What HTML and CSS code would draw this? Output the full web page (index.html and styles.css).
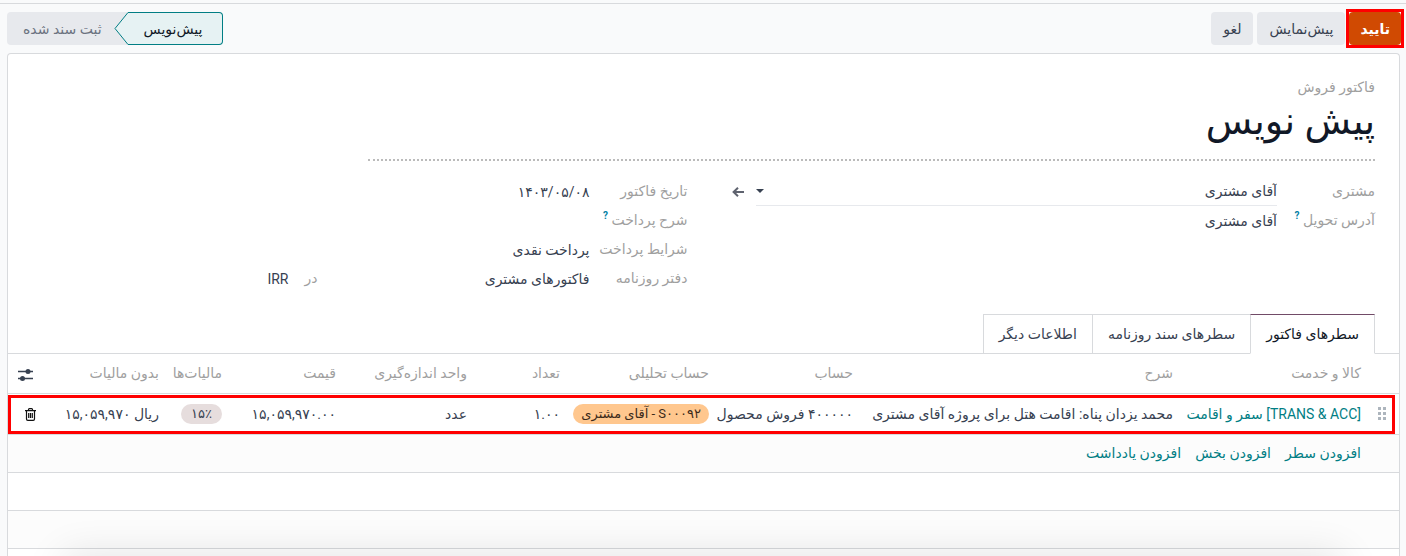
FILE: index.html
```html
<!DOCTYPE html>
<html lang="fa" dir="rtl">
<head>
  <meta charset="UTF-8">
  <title>فاکتور فروش</title>
  <meta name="viewport" content="width=device-width, initial-scale=1.0">
  <link rel="stylesheet" href="styles.css">
</head>
<body>
  <header class="control-bar">
    <div class="actions">
      <div class="marked">
        <button class="btn btn-primary" type="button">تایید</button>
      </div>
      <button class="btn" type="button">پیش‌نمایش</button>
      <button class="btn" type="button">لغو</button>
    </div>
    <div class="statusbar">
      <button class="status status-active" type="button">
        پیش‌نویس
        <svg class="status-arrow" width="15" height="33" viewBox="0 0 15 33" aria-hidden="true">
          <path d="M15 .5H14L1 16.500L14 32.500H15" fill="#e6f2f3" stroke="#017e84"/>
        </svg>
      </button>
      <button class="status" type="button">ثبت سند شده</button>
    </div>
  </header>

  <main class="sheet">
    <div class="title-block">
      <div class="doc-type">فاکتور فروش</div>
      <h1>پیش نویس</h1>
    </div>

    <div class="fields">
      <div class="group">
        <div class="field">
          <label for="customer">مشتری</label>
          <div class="value">
            <div class="combo">
              <input type="text" id="customer" value="آقای مشتری">
              <svg width="8" height="4" viewBox="0 0 8 4" aria-hidden="true"><path d="M0 0h8L4 4z" fill="#374151"/></svg>
            </div>
            <button class="open-record" type="button" aria-label="باز کردن">
              <svg width="12" height="10" viewBox="0 0 12 10" fill="none" stroke="#5f636f" stroke-width="2" aria-hidden="true"><path d="M12 5H2M6 .8L1.600 5L6 9.200"/></svg>
            </button>
          </div>
        </div>
        <div class="field">
          <label for="address">آدرس تحویل <sup>?</sup></label>
          <div class="value"><input type="text" id="address" value="آقای مشتری"></div>
        </div>
      </div>

      <div class="group">
        <div class="field">
          <label for="date">تاریخ فاکتور</label>
          <div class="value"><input type="text" id="date" value="۱۴۰۳/۰۵/۰۸"></div>
        </div>
        <div class="field">
          <label for="payment-ref">شرح پرداخت <sup>?</sup></label>
          <div class="value"><input type="text" id="payment-ref"></div>
        </div>
        <div class="field">
          <label for="terms">شرایط پرداخت</label>
          <div class="value"><input type="text" id="terms" value="پرداخت نقدی"></div>
        </div>
        <div class="field">
          <label for="journal">دفتر روزنامه</label>
          <div class="value">
            <input class="journal" type="text" id="journal" value="فاکتورهای مشتری">
            <label class="in" for="currency">در</label>
            <input type="text" id="currency" value="IRR">
          </div>
        </div>
      </div>
    </div>

    <nav class="tabs">
      <a class="tab tab-active" href="#lines">سطرهای فاکتور</a>
      <a class="tab" href="#journal-items">سطرهای سند روزنامه</a>
      <a class="tab" href="#other">اطلاعات دیگر</a>
    </nav>

    <table class="lines" id="lines">
      <thead>
        <tr>
          <th class="col-handle"></th>
          <th class="col-product">کالا و خدمت</th>
          <th>شرح</th>
          <th class="col-account">حساب</th>
          <th class="col-analytic">حساب تحلیلی</th>
          <th class="col-qty">تعداد</th>
          <th class="col-uom">واحد اندازه‌گیری</th>
          <th class="col-price">قیمت</th>
          <th class="col-tax">مالیات‌ها</th>
          <th class="col-subtotal">بدون مالیات</th>
          <th class="col-options">
            <button class="icon-btn" type="button" aria-label="ستون‌ها">
              <svg width="15" height="12" viewBox="0 0 15 12" aria-hidden="true">
                <path d="M0 2.500h15M0 9.500h15" stroke="#374151" stroke-width="1.300"/>
                <circle cx="10" cy="2.500" r="2.500" fill="#374151"/>
                <circle cx="4.500" cy="9.500" r="2.500" fill="#374151"/>
              </svg>
            </button>
          </th>
        </tr>
      </thead>
      <tbody>
        <tr class="line-marked">
          <td class="handle">
            <svg width="9" height="13" viewBox="0 0 9 13" fill="#adb5bd" aria-hidden="true">
              <path d="M0 0h3v3H0zM5 0h3v3H5zM0 5h3v3H0zM5 5h3v3H5zM0 10h3v3H0zM5 10h3v3H5z"/>
            </svg>
          </td>
          <td><a href="#product">[TRANS &amp; ACC] سفر و اقامت</a></td>
          <td>محمد یزدان پناه: اقامت هتل برای پروژه آقای مشتری</td>
          <td>۴۰۰۰۰۰ فروش محصول</td>
          <td><span class="tag tag-orange">S۰۰۰۹۲ - آقای مشتری</span></td>
          <td>۱.۰۰</td>
          <td>عدد</td>
          <td>۱۵,۰۵۹,۹۷۰.۰۰</td>
          <td><span class="tag tag-tax">۱۵٪</span></td>
          <td>ریال ۱۵,۰۵۹,۹۷۰</td>
          <td class="col-options">
            <button class="icon-btn trash" type="button" aria-label="حذف">
              <svg width="11" height="13" viewBox="0 0 11 13" fill="none" stroke="#111" stroke-width="1.200" aria-hidden="true">
                <path d="M0 2.600h11M3.500 2.400V1.500Q3.500.6 4.400.6h2.200Q7.500.6 7.500 1.500v.9M1.500 2.800v8.200q0 1.300 1.300 1.300h5.400q1.300 0 1.300-1.300V2.800M3.700 5v5M5.500 5v5M7.300 5v5"/>
              </svg>
            </button>
          </td>
        </tr>
        <tr class="shaded">
          <td></td>
          <td colspan="10">
            <div class="add-links">
              <a href="#add-line">افزودن سطر</a>
              <a href="#add-section">افزودن بخش</a>
              <a href="#add-note">افزودن یادداشت</a>
            </div>
          </td>
        </tr>
        <tr><td colspan="11"></td></tr>
        <tr class="shaded"><td colspan="11"></td></tr>
      </tbody>
    </table>
  </main>

  <div class="bottom-shadow"></div>
</body>
</html>
```

FILE: styles.css
```css
* {
  box-sizing: border-box;
}
body {
  margin: 0;
  padding: 3px 6px 0 7px;
  height: 100vh;
  overflow: hidden;
  display: flex;
  flex-direction: column;
  background-color: #f9fafb;
  color: #374151;
  font-family: Roboto, "DejaVu Sans", sans-serif;
  font-size: 14px;
  line-height: 20px;
}
button, input {
  font: inherit;
  color: inherit;
}
a {
  color: #017e84;
  text-decoration: none;
}

/* top bar */
.control-bar {
  display: flex;
  justify-content: space-between;
  margin: 0 -6px 0 -7px;
  padding: 8px 5px 8px 7px;
  border-top: 1px solid #d8dadd;
}
.actions {
  display: flex;
  gap: 4px;
}
.marked {
  outline: 3px solid #f00;
}
.btn {
  height: 33px;
  padding: 0 12px;
  border: 0;
  border-radius: 4px;
  background-color: #e7e9ed;
  cursor: pointer;
}
.btn-primary {
  padding: 0 11px;
  background-color: #d04a02;
  color: white;
  font-weight: bold;
}
.statusbar {
  display: flex;
}
.status {
  position: relative;
  height: 33px;
  padding: 0 26px 0 16px;
  border: 0;
  border-radius: 4px 0 0 4px;
  background-color: #e7e9ed;
  color: #6b7280;
}
.status-active {
  z-index: 1;
  padding: 0 20px 0 16px;
  border: 1px solid #017e84;
  border-left: 0;
  border-radius: 0 4px 4px 0;
  background-color: #e6f2f3;
  color: #111827;
}
.status-arrow {
  position: absolute;
  top: -1px;
  left: -14px;
}

/* sheet */
.sheet {
  flex: 1;
  border: 1px solid #d8dadd;
  border-bottom: 0;
  border-radius: 4px 4px 0 0;
  background-color: white;
  padding-top: 22px;
}
.title-block {
  padding: 0 24px;
}
.doc-type {
  color: #9f9f9f;
  line-height: 22px;
}
.title-block h1 {
  width: 75%;
  margin: 0;
  padding-bottom: 15px;
  border-bottom: 2px dotted #bbb;
  color: #111827;
  font-size: 38px;
  font-weight: normal;
  line-height: 46px;
}
.fields {
  display: grid;
  grid-template-columns: 1fr 1fr;
  gap: 32px;
  padding: 16px 24px 21px;
}
.field {
  display: flex;
  height: 29px;
}
.field label {
  flex: 0 0 98px;
  color: #9f9f9f;
  line-height: 28px;
  white-space: nowrap;
}
.field sup {
  color: #0180a5;
  font-size: 10px;
  font-weight: bold;
  line-height: 1px;
}
.value {
  flex: 1;
  display: flex;
  min-width: 0;
}
.value input {
  flex: 1;
  min-width: 0;
  padding: 0;
  border: 0;
  background: none;
  outline: none;
}
.combo {
  flex: 1;
  display: flex;
  align-items: center;
  border-bottom: 1px solid #e7e9ed;
}
.open-record {
  width: 36px;
  padding: 0;
  border: 0;
  background: none;
}
.value .journal {
  flex: 0 0 272px;
}
.field .in {
  flex: 0 0 29px;
}

/* tabs */
.tabs {
  display: flex;
  padding-right: 24px;
  border-bottom: 1px solid #d8dadd;
}
.tab {
  margin-bottom: -1px;
  padding: 9px 15px;
  border: 1px solid #d8dadd;
  border-right: 0;
  color: #374151;
}
.tab-active {
  border-right: 1px solid #d8dadd;
  border-top-color: #714b67;
  border-bottom-color: white;
  color: #111827;
}

/* invoice lines */
.lines {
  width: 100%;
  table-layout: fixed;
  border-collapse: collapse;
}
.lines th,
.lines td {
  height: 38px;
  padding: 0 7px;
  border-bottom: 1px solid #d8dadd;
  text-align: right;
  white-space: nowrap;
}
.lines th {
  height: 39px;
  color: #9f9f9f;
  font-weight: normal;
}
.col-handle { width: 31px; }
.col-product { width: 188px; }
.col-account { width: 144px; }
.col-analytic { width: 149px; }
.col-qty { width: 93px; }
.col-uom { width: 131px; }
.col-price { width: 114px; }
.col-tax { width: 63px; }
.col-subtotal { width: 104px; }
.lines .col-options {
  width: 54px;
  padding: 0 0 0 10px;
  text-align: left;
}
.icon-btn {
  display: inline-flex;
  padding: 0;
  border: 0;
  background: none;
  vertical-align: middle;
  cursor: pointer;
}
.trash {
  padding-left: 7px;
}
.shaded {
  background-color: #fcfcfc;
}
.line-marked {
  position: relative;
}
.lines .line-marked td {
  height: 41px;
}
.handle::after {
  content: "";
  position: absolute;
  inset: 2px 4px 0 0;
  border: 3px solid #f00;
  pointer-events: none;
}
.lines .handle {
  padding: 0 12px 0 0;
}
.handle svg {
  display: block;
}
.tag {
  display: inline-block;
  padding: 0 8px;
  border-radius: 10px;
  font-size: 13px;
  line-height: 20px;
}
.tag-orange {
  background-color: #ffc78e;
  color: #3b2a1a;
}
.tag-tax {
  padding: 0 10px;
  background-color: #e6dddd;
}
.add-links {
  display: flex;
  gap: 14px;
}

.bottom-shadow {
  position: fixed;
  top: 100%;
  left: 64px;
  right: 64px;
  height: 40px;
  box-shadow: 0 0 40px rgba(0, 0, 0, 0.12);
}
```
